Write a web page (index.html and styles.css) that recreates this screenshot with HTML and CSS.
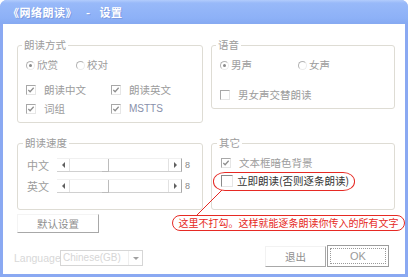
FILE: index.html
```html
<!DOCTYPE html>
<html>
<head>
<meta charset="utf-8">
<link rel="stylesheet" href="styles.css">
</head>
<body>
<div class="window">
  <div class="titlebar">《网络朗读》   -   设置</div>
  <div class="client">
    <div class="grouprow top">
      <fieldset class="group mode">
        <legend>朗读方式</legend>
        <div class="line">
          <span class="opt w50"><span class="radio on"></span>欣赏</span>
          <span class="opt"><span class="radio"></span>校对</span>
        </div>
        <div class="checks">
          <span class="opt"><span class="check on"><svg viewBox="0 0 9 9"><path d="M1.5 4.5 L3.5 6.5 L7.5 2" /></svg></span>朗读中文</span>
          <span class="opt"><span class="check on"><svg viewBox="0 0 9 9"><path d="M1.5 4.5 L3.5 6.5 L7.5 2" /></svg></span>朗读英文</span>
          <span class="opt"><span class="check on"><svg viewBox="0 0 9 9"><path d="M1.5 4.5 L3.5 6.5 L7.5 2" /></svg></span>词组</span>
          <span class="opt"><span class="check on"><svg viewBox="0 0 9 9"><path d="M1.5 4.5 L3.5 6.5 L7.5 2" /></svg></span><span class="latin">MSTTS</span></span>
        </div>
      </fieldset>
      <fieldset class="group voice">
        <legend>语音</legend>
        <div class="line">
          <span class="opt w78"><span class="radio on"></span>男声</span>
          <span class="opt"><span class="radio"></span>女声</span>
        </div>
        <div class="line alt">
          <span class="opt"><span class="check"></span>男女声交替朗读</span>
        </div>
      </fieldset>
    </div>
    <div class="grouprow mid">
      <fieldset class="group speed">
        <legend>朗读速度</legend>
        <div class="srow">
          <span class="slabel">中文</span>
          <span class="slider"><span class="sbtn"><span class="tri l"></span></span><span class="track"><span class="thumb"></span></span><span class="sbtn"><span class="tri r"></span></span></span>
          <span class="sval">8</span>
        </div>
        <div class="srow">
          <span class="slabel">英文</span>
          <span class="slider"><span class="sbtn"><span class="tri l"></span></span><span class="track"><span class="thumb"></span></span><span class="sbtn"><span class="tri r"></span></span></span>
          <span class="sval">8</span>
        </div>
      </fieldset>
      <fieldset class="group other">
        <legend>其它</legend>
        <div class="line">
          <span class="opt"><span class="check on"><svg viewBox="0 0 9 9"><path d="M1.5 4.5 L3.5 6.5 L7.5 2" /></svg></span>文本框暗色背景</span>
        </div>
        <div class="line big">
          <span class="opt"><span class="check big"></span>立即朗读(否则逐条朗读)</span>
        </div>
      </fieldset>
    </div>
    <div class="btnrow">
      <span class="btn default">默认设置</span>
    </div>
    <div class="footer">
      <div class="lang">
        <span class="langlabel">Language</span>
        <span class="combo"><span class="ctext">Chinese(GB)</span><span class="cbtn"><span class="tri d"></span></span></span>
      </div>
      <div class="actions">
        <span class="btn exit">退出</span>
        <span class="btn ok"><span class="focus">OK</span></span>
      </div>
    </div>
  </div>
  <div class="ring"></div>
  <svg class="pointer" width="410" height="280"><line x1="222" y1="190" x2="196" y2="216" /></svg>
  <div class="bubble">这里不打勾。这样就能逐条朗读你传入的所有文字</div>
</div>
</body>
</html>
```
FILE: styles.css
```css
body {
  margin: 0;
  background: #fff;
  font-family: "Noto Sans CJK SC", "Liberation Sans", sans-serif;
}
.window {
  position: relative;
  width: 408px;
  height: 277px;
  background: #8aa9f2;
  border-radius: 7px 7px 0 0;
  display: flex;
  flex-direction: column;
}
.titlebar {
  flex: none;
  height: 24px;
  line-height: 24px;
  padding-left: 8px;
  border-radius: 7px 7px 0 0;
  background: linear-gradient(#b2ccfc 0, #98b9f9 3px, #8db1f7 18px, #86a9f1 24px);
  color: #fff;
  font-size: 11px;
  font-weight: bold;
  letter-spacing: 0.5px;
  white-space: pre;
  text-shadow: 1px 1px 0 #7e9be0;
}
.client {
  flex: 1;
  margin: 0 3px 3px;
  background: #fff;
  padding: 15px 11px 0 14px;
  font-size: 10.5px;
  color: #9c9c9c;
}
.grouprow {
  display: grid;
  grid-template-columns: 186px 184px;
  column-gap: 8px;
  align-items: start;
}
.grouprow.mid {
  margin-top: 14px;
  align-items: stretch;
}
.group {
  margin: 0;
  min-width: 0;
  border: 1px solid #dedcd4;
  border-radius: 3px;
  padding: 7px 8px 6px 8px;
}
legend {
  padding: 0 2px;
  margin-left: -4px;
  line-height: 12px;
  font-size: 10.5px;
  color: #9c9c9c;
}
.line {
  display: flex;
  align-items: center;
  height: 14px;
}
.line.alt { margin-top: 16px; }
.opt {
  display: inline-flex;
  align-items: center;
  white-space: nowrap;
  line-height: 14px;
}
.w50 { width: 50px; }
.w78 { width: 78px; }
.radio {
  width: 7px;
  height: 7px;
  border-radius: 50%;
  border: 1px solid;
  border-color: #b4b4b4 #ececec #ececec #b4b4b4;
  margin-right: 2px;
  position: relative;
}
.radio.on::after {
  content: "";
  position: absolute;
  left: 2px;
  top: 2px;
  width: 3px;
  height: 3px;
  border-radius: 50%;
  background: #8a8a8a;
}
.check {
  width: 8px;
  height: 8px;
  border: 1px solid;
  border-color: #a8a8a8 #e6e6e6 #e6e6e6 #a8a8a8;
  margin-right: 8px;
  display: inline-block;
}
.check svg {
  display: block;
  width: 8px;
  height: 8px;
}
.check path {
  fill: none;
  stroke: #8e8e8e;
  stroke-width: 1.4;
}
.checks {
  display: grid;
  grid-template-columns: 85px auto;
  row-gap: 5px;
  margin-top: 11px;
}
.latin {
  font-family: "Liberation Sans", sans-serif;
  font-size: 10px;
  color: #8890aa;
}
.speed { padding: 9px 8px 16px 9px; }
.srow {
  display: flex;
  align-items: center;
  height: 14px;
}
.srow + .srow { margin-top: 7px; }
.slabel {
  width: 30px;
  font-size: 11px;
}
.slider {
  display: flex;
  width: 125px;
  height: 14px;
  box-sizing: border-box;
  border-bottom: 1px solid #d0d0d0;
  border-top: 1px solid #f0f0f0;
  border-right: 1px solid #a8a8a8;
}
.sbtn {
  width: 12px;
  display: flex;
  align-items: center;
  justify-content: center;
  border-right: 1px solid #e2e2e2;
}
.sbtn + .track + .sbtn { border-right: 0; border-left: 1px solid #e2e2e2; }
.track {
  flex: 1;
  position: relative;
  background: #fff;
}
.thumb {
  position: absolute;
  left: 32px;
  top: 0;
  bottom: -1px;
  width: 6px;
  border-right: 1px solid #bcbcbc;
  border-bottom: 1px solid #bcbcbc;
}
.tri {
  width: 0;
  height: 0;
  border: 3px solid transparent;
}
.tri.l { border-right: 3px solid #606060; border-left: 0; }
.tri.r { border-left: 3px solid #606060; border-right: 0; }
.tri.d { border-top: 3px solid #a0a0a0; border-bottom: 0; }
.sval {
  margin-left: 3px;
  font-family: "Liberation Sans", sans-serif;
  font-size: 9px;
  color: #888;
}
.other { padding: 7px 8px 6px 9px; }
.line.big { margin-top: 2px; height: 17px; }
.line.big .opt {
  font-size: 10.5px;
  color: #333;
  line-height: 17px;
}
.check.big {
  width: 10px;
  height: 10px;
  border-color: #8a8a8a #e6e6e6 #e6e6e6 #8a8a8a;
  margin-right: 4px;
}
.btnrow {
  margin-top: 4px;
  display: flex;
}
.btn {
  display: flex;
  align-items: center;
  justify-content: center;
  box-sizing: border-box;
  background: #fff;
  color: #8e8e8e;
  font-size: 10.5px;
}
.default {
  width: 82px;
  height: 19px;
  border-right: 1px solid #a8a8a8;
  border-bottom: 1px solid #a8a8a8;
  border-top: 1px solid #f4f4f4;
  border-left: 1px solid #f4f4f4;
}
.footer {
  margin-top: 12px;
  display: flex;
  justify-content: space-between;
  align-items: flex-end;
}
.lang {
  display: flex;
  align-items: center;
  margin-left: -3px;
  margin-bottom: 1px;
}
.langlabel {
  font-family: "Liberation Sans", sans-serif;
  font-size: 10.5px;
  color: #d8d8d8;
  width: 46px;
}
.combo {
  display: flex;
  width: 83px;
  height: 16px;
  box-sizing: border-box;
  border: 1px solid #d6d6d6;
}
.ctext {
  flex: 1;
  font-family: "Liberation Sans", sans-serif;
  font-size: 10px;
  line-height: 14px;
  padding-left: 2px;
  color: #d6d6d6;
}
.cbtn {
  width: 13px;
  display: flex;
  align-items: center;
  justify-content: center;
  border-left: 1px solid #efefef;
}
.actions {
  display: flex;
  align-items: flex-end;
  gap: 1px;
  margin-right: 5px;
}
.exit {
  width: 61px;
  height: 21px;
  border-right: 1px solid #a8a8a8;
  border-bottom: 1px solid #a8a8a8;
  border-top: 1px solid #f2f2f2;
  border-left: 1px solid #f2f2f2;
}
.ok {
  width: 62px;
  height: 22px;
  border: 1px solid #9c9c9c;
  padding: 2px;
}
.focus {
  flex: 1;
  align-self: stretch;
  display: flex;
  align-items: center;
  justify-content: center;
  border: 1px dotted #9a9a9a;
  font-family: "Liberation Sans", sans-serif;
  font-size: 11px;
  color: #9a9a9a;
}
.ring {
  position: absolute;
  left: 213px;
  top: 172px;
  width: 140px;
  height: 17px;
  border: 1.5px solid #e62a24;
  border-radius: 12px / 9px;
}
.pointer {
  position: absolute;
  left: 0;
  top: 0;
  pointer-events: none;
}
.pointer line {
  stroke: #e62a24;
  stroke-width: 1;
}
.bubble {
  position: absolute;
  left: 172px;
  top: 215px;
  width: 233px;
  height: 16px;
  box-sizing: border-box;
  border: 1px solid #e62a24;
  border-radius: 8px;
  background: #fff;
  color: #e62a24;
  font-size: 10px;
  line-height: 14px;
  text-align: center;
  white-space: nowrap;
}
```
